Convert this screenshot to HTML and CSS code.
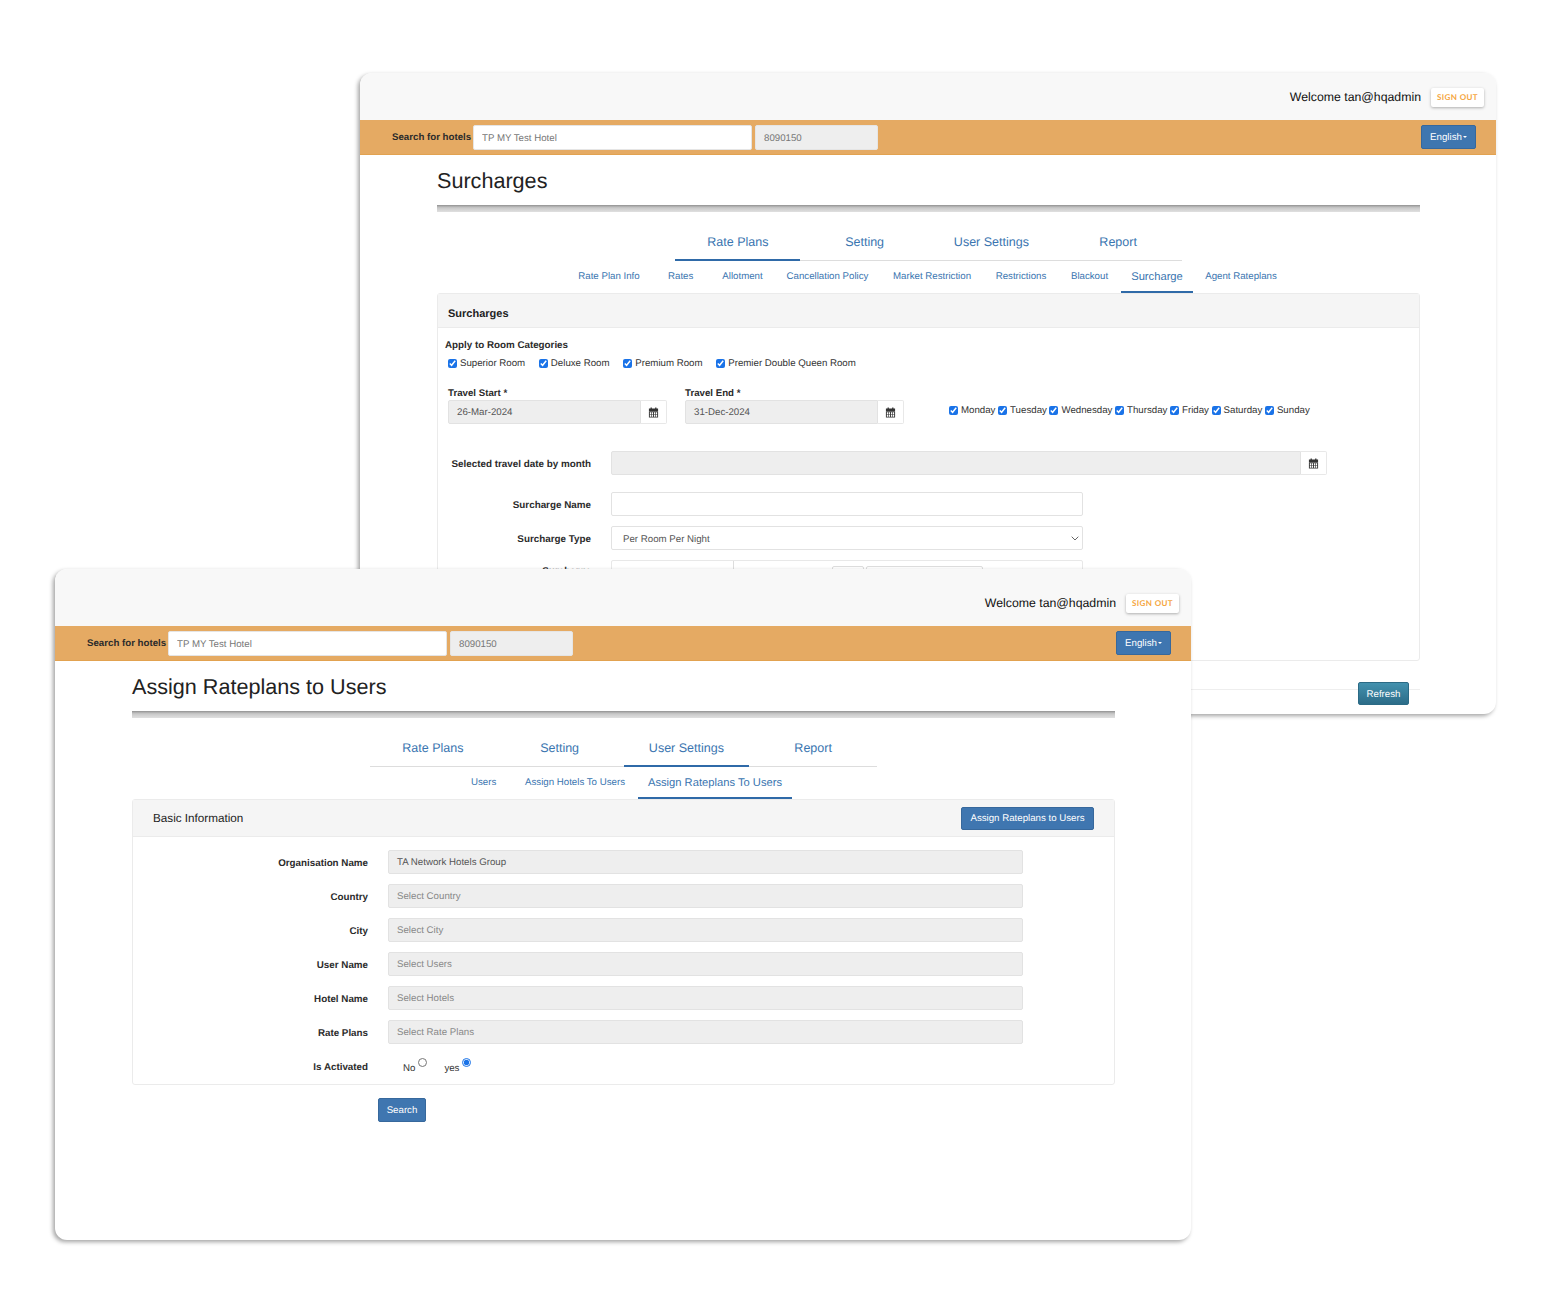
FILE: index.html
```html
<!DOCTYPE html>
<html lang="en">
<head>
<meta charset="utf-8">
<title>Rate plan screens</title>
<link rel="stylesheet" href="styles.css">
</head>
<body>
<svg class="sprite" width="0" height="0" aria-hidden="true">
  <symbol id="cal" viewBox="0 0 12 12">
    <path fill="currentColor" fill-rule="evenodd" d="M1 1.6h1.8V.6h1.4v1h3.6v-1h1.4v1H11v2.9H1zM1 5h10v6.4H1zM2 5.7v2.1h1.4V5.7zm2.1 0v2.1h1.4V5.7zm2.4 0v2.1h1.4V5.7zm2.1 0v2.1H10V5.7zM2 8.5v2.1h1.4V8.5zm2.1 0v2.1h1.4V8.5zm2.4 0v2.1h1.4V8.5zm2.1 0v2.1H10V8.5z"/>
  </symbol>
</svg>
<main class="canvas">

  <section class="window window-back">
    <header class="topbar topbar-short">
      <span class="welcome">Welcome tan@hqadmin</span>
      <button class="signout" type="button">SIGN OUT</button>
    </header>
    <div class="searchbar">
      <label class="search-label">Search for hotels</label>
      <input class="hotel-input" type="text" value="TP MY Test Hotel">
      <input class="id-input" type="text" value="8090150" disabled>
      <button class="btn btn-lang" type="button">English<span class="caret"></span></button>
    </div>
    <div class="content">
      <h1 class="title">Surcharges</h1>
      <div class="rule"></div>
      <nav class="tabs">
        <a class="tab active">Rate Plans</a><a class="tab">Setting</a><a class="tab">User Settings</a><a class="tab">Report</a>
      </nav>
      <nav class="subtabs subtabs-back">
        <a class="subtab st-info">Rate Plan Info</a>
        <a class="subtab st-rates">Rates</a>
        <a class="subtab st-allot">Allotment</a>
        <a class="subtab st-cancel">Cancellation Policy</a>
        <a class="subtab st-market">Market Restriction</a>
        <a class="subtab st-restr">Restrictions</a>
        <a class="subtab st-black">Blackout</a>
        <a class="subtab active st-sur">Surcharge</a>
        <a class="subtab st-agent">Agent Rateplans</a>
      </nav>
      <section class="panel panel-back">
        <div class="panel-head panel-head-back"><strong>Surcharges</strong></div>
        <div class="panel-body-back">
          <div class="apply-title">Apply to Room Categories</div>
          <div class="rooms">
            <label class="check"><input type="checkbox" checked>Superior Room</label>
            <label class="check"><input type="checkbox" checked>Deluxe Room</label>
            <label class="check"><input type="checkbox" checked>Premium Room</label>
            <label class="check"><input type="checkbox" checked>Premier Double Queen Room</label>
          </div>
          <div class="travel">
            <div class="date-field">
              <div class="field-label">Travel Start *</div>
              <div class="input-group">
                <div class="ctrl ctrl-disabled">26-Mar-2024</div>
                <span class="addon"><svg class="cal"><use href="#cal"/></svg></span>
              </div>
            </div>
            <div class="date-field">
              <div class="field-label">Travel End *</div>
              <div class="input-group">
                <div class="ctrl ctrl-disabled">31-Dec-2024</div>
                <span class="addon"><svg class="cal"><use href="#cal"/></svg></span>
              </div>
            </div>
            <div class="days">
              <label class="day"><input type="checkbox" checked>Monday</label>
              <label class="day"><input type="checkbox" checked>Tuesday</label>
              <label class="day"><input type="checkbox" checked>Wednesday</label>
              <label class="day"><input type="checkbox" checked>Thursday</label>
              <label class="day"><input type="checkbox" checked>Friday</label>
              <label class="day"><input type="checkbox" checked>Saturday</label>
              <label class="day"><input type="checkbox" checked>Sunday</label>
            </div>
          </div>
          <div class="hrow hrow-month">
            <label class="hlabel">Selected travel date by month</label>
            <div class="input-group month-group">
              <div class="ctrl ctrl-disabled"></div>
              <span class="addon"><svg class="cal"><use href="#cal"/></svg></span>
            </div>
          </div>
          <div class="hrow hrow-name">
            <label class="hlabel">Surcharge Name</label>
            <input class="ctrl wide" type="text">
          </div>
          <div class="hrow hrow-type">
            <label class="hlabel">Surcharge Type</label>
            <select class="ctrl wide sel"><option>Per Room Per Night</option></select>
          </div>
          <div class="hrow hrow-amount">
            <label class="hlabel">Surcharge</label>
            <div class="amount">
              <span class="amount-a"></span>
              <span class="amount-b"></span>
              <span class="amount-c"></span>
              <span class="amount-d"></span>
            </div>
          </div>
        </div>
      </section>
      <footer class="foot">
        <button class="btn btn-refresh" type="button">Refresh</button>
      </footer>
    </div>
  </section>

  <section class="window window-front">
    <header class="topbar topbar-tall">
      <span class="welcome">Welcome tan@hqadmin</span>
      <button class="signout" type="button">SIGN OUT</button>
    </header>
    <div class="searchbar">
      <label class="search-label">Search for hotels</label>
      <input class="hotel-input" type="text" value="TP MY Test Hotel">
      <input class="id-input" type="text" value="8090150" disabled>
      <button class="btn btn-lang" type="button">English<span class="caret"></span></button>
    </div>
    <div class="content">
      <h1 class="title">Assign Rateplans to Users</h1>
      <div class="rule"></div>
      <nav class="tabs">
        <a class="tab">Rate Plans</a><a class="tab">Setting</a><a class="tab active">User Settings</a><a class="tab">Report</a>
      </nav>
      <nav class="subtabs subtabs-front">
        <a class="subtab st-users">Users</a>
        <a class="subtab st-hotels">Assign Hotels To Users</a>
        <a class="subtab active st-assign">Assign Rateplans To Users</a>
      </nav>
      <section class="panel panel-front">
        <div class="panel-head panel-head-front">
          <span class="basic">Basic Information</span>
          <button class="btn btn-assign" type="button">Assign Rateplans to Users</button>
        </div>
        <div class="panel-body-front">
          <div class="frow"><label class="flabel">Organisation Name</label><div class="ctrl ctrl-disabled fctrl filled">TA Network Hotels Group</div></div>
          <div class="frow"><label class="flabel">Country</label><div class="ctrl ctrl-disabled fctrl">Select Country</div></div>
          <div class="frow"><label class="flabel">City</label><div class="ctrl ctrl-disabled fctrl">Select City</div></div>
          <div class="frow"><label class="flabel">User Name</label><div class="ctrl ctrl-disabled fctrl">Select Users</div></div>
          <div class="frow"><label class="flabel">Hotel Name</label><div class="ctrl ctrl-disabled fctrl">Select Hotels</div></div>
          <div class="frow"><label class="flabel">Rate Plans</label><div class="ctrl ctrl-disabled fctrl">Select Rate Plans</div></div>
          <div class="frow frow-radio">
            <label class="flabel">Is Activated</label>
            <div class="radios">
              <label class="radio">No<input type="radio" name="act"></label>
              <label class="radio">yes<input type="radio" name="act" checked></label>
            </div>
          </div>
        </div>
      </section>
      <div class="search-row"><button class="btn btn-search" type="button">Search</button></div>
    </div>
  </section>

</main>
</body>
</html>
```

FILE: styles.css
```css
* { box-sizing: border-box; text-rendering: geometricPrecision; }
html, body { margin: 0; padding: 0; background: #fff; }
body { font-family: "Liberation Sans", Arial, sans-serif; color: #333; font-size: 9.7px; }
.sprite { position: absolute; }
.canvas { position: relative; width: 1552px; height: 1312px; overflow: hidden; }

.window {
  position: absolute;
  width: 1136px;
  background: #fff;
  border-radius: 12px;
  overflow: hidden;
  box-shadow: -2px 2px 4px rgba(0,0,0,.36);
}
.window-back { left: 360px; top: 73px; height: 641px; }
.window-front { left: 55px; top: 569px; height: 671px; }

.topbar {
  display: flex;
  justify-content: flex-end;
  align-items: center;
  background: #f8f8f8;
  padding-right: 12px;
  gap: 10px;
}
.topbar-short { height: 47px; padding-top: 1px; }
.topbar-tall { height: 57px; padding-top: 11px; }
.welcome { font-size: 12.3px; color: #111; }
.signout {
  width: 53px;
  height: 19px;
  padding: 0;
  border: 0;
  border-radius: 2px;
  background: #fff;
  box-shadow: 0 1px 3px rgba(0,0,0,.3);
  color: #f5a53c;
  font: bold 8px "Lato", "Liberation Sans", sans-serif;
  letter-spacing: .4px;
}

.searchbar {
  display: flex;
  align-items: center;
  height: 35px;
  padding: 0 20px 0 32px;
  background: #e5aa63;
  border-bottom: 1px solid #e2a250;
}
.search-label { font-weight: bold; font-size: 9.7px; color: #2b2b2b; width: 80px; white-space: nowrap; margin-top: 1px; }
.hotel-input, .id-input {
  height: 25px;
  padding: 2px 8px 0;
  border: 1px solid #e5e5e5;
  border-radius: 2px;
  font: 9.7px "Liberation Sans", sans-serif;
  color: #777;
  outline: 0;
}
.hotel-input { width: 279px; background: #fff; margin-left: 1px; }
.id-input { width: 123px; background: #eee; margin-left: 3px; color: #777; }

.btn {
  padding: 1px 0 0;
  border: 1px solid #37689c;
  border-radius: 2px;
  background: #3f76b0;
  color: #fff;
  font: 9.7px "Liberation Sans", sans-serif;
}
.btn-lang { width: 55px; height: 24px; margin-left: auto; }
.caret {
  display: inline-block;
  margin-left: 1px;
  vertical-align: middle;
  border-top: 2.5px solid #fff;
  border-left: 2.5px solid transparent;
  border-right: 2.5px solid transparent;
}

.content { padding: 0 76px 0 77px; }
.title { margin: 0; padding-top: 13px; height: 50px; font-size: 21.6px; line-height: 26px; font-weight: 400; color: #222; }
.rule {
  height: 7px;
  background: linear-gradient(#8f8f8f 0, #a8a8a8 15%, #c8c8c8 40%, #e0e0e0 100%);
}

.tabs {
  display: flex;
  width: 507px;
  margin: 13px 0 0 238px;
  border-bottom: 1px solid #ddd;
}
.tab {
  flex: 1 1 0;
  height: 36px;
  padding: 10px 1px 0 0;
  text-align: center;
  font-size: 12.5px;
  line-height: 15px;
  color: #3a75b0;
  margin-bottom: -1px;
}
.tab.active { background: linear-gradient(#2f6aa8, #2f6aa8) left bottom / 125px 2px no-repeat; }

.subtabs { display: flex; height: 32px; align-items: stretch; }
.subtab {
  display: block;
  font-size: 9.7px;
  line-height: 11px;
  padding-top: 10px;
  color: #3a75b0;
  white-space: nowrap;
  text-align: center;
}
.subtab.active { font-size: 11.2px; border-bottom: 2px solid #2f6aa8; padding-top: 11px; }

.subtabs-back { padding-left: 141px; }
.st-info { width: 62px; }
.st-rates { width: 25px; margin-left: 28px; }
.st-allot { width: 41px; margin-left: 29px; }
.st-cancel { width: 83px; margin-left: 23px; }
.st-market { width: 80px; margin-left: 23px; }
.st-restr { width: 52px; margin-left: 23px; }
.st-black { width: 39px; margin-left: 23px; }
.st-sur { width: 72px; margin-left: 12px; }
.st-agent { width: 72px; margin-left: 12px; }

.subtabs-front { padding-left: 339px; }
.st-users { width: 25px; }
.st-hotels { width: 100px; margin-left: 29px; }
.st-assign { width: 154px; margin-left: 13px; }

.panel { border: 1px solid #ebebeb; border-radius: 3px; }
.panel-back { height: 368px; }
.panel-head { display: flex; align-items: center; background: #f5f5f5; border-bottom: 1px solid #ebebeb; }
.panel-head-back { height: 34px; padding: 6px 0 0 10px; font-size: 11px; color: #222; }
.panel-head-front { height: 37px; padding: 0 20px; justify-content: space-between; }

.panel-body-back { padding-top: 12px; padding-left: 7px; }
.apply-title { font-weight: bold; font-size: 9.8px; line-height: 12px; color: #2b2b2b; }
.rooms { display: flex; margin: 6px 0 0 3px; gap: 13.7px; }
.check, .day { display: flex; align-items: center; color: #333; white-space: nowrap; }
.check { font-size: 9.7px; line-height: 12px; }
.check input, .day input {
  width: 9px; height: 9px; margin: 0 3px 2px 0; accent-color: #1a73e8;
}
.travel { display: flex; margin: 18px 0 0 3px; height: 46px; }
.date-field { width: 219px; margin-right: 18px; }
.field-label { font-weight: bold; font-size: 9.7px; line-height: 12px; height: 12px; color: #2b2b2b; }
.input-group { display: flex; height: 24px; }
.ctrl {
  display: flex;
  align-items: center;
  height: 24px;
  padding: 0 8px;
  border: 1px solid #e2e2e2;
  border-radius: 2px;
  font: 9.7px "Liberation Sans", sans-serif;
  color: #555;
  background: #fff;
  outline: 0;
}
.ctrl-disabled { background: #eee; }
.input-group .ctrl { flex: 1; border-radius: 2px 0 0 2px; }
.addon {
  display: flex;
  align-items: center;
  justify-content: center;
  width: 26px;
  border: 1px solid #e8e8e8;
  border-left: 0;
  border-radius: 0 2px 2px 0;
  background: #fff;
  color: #333;
}
.cal { width: 11px; height: 11px; margin-left: -1px; }
.days { display: flex; margin-left: 27px; height: 24px; margin-top: 11px; align-items: center; }
.day { font-size: 9.7px; line-height: 12px; margin-right: 2.6px; }
.hrow { display: grid; grid-template-columns: 146px auto; column-gap: 20px; align-items: center; justify-items: start; }
.hlabel { justify-self: end; font-weight: bold; font-size: 9.85px; color: #2b2b2b; white-space: nowrap; margin-top: 3px; }
.hrow-amount .hlabel { margin-top: -1px; }
.hrow-month { margin-top: 17px; }
.month-group { width: 716px; }
.hrow-name { margin-top: 17px; }
.hrow-type { margin-top: 10px; }
.hrow-amount { margin-top: 10px; }
.wide { width: 472px; }
.sel {
  appearance: none;
  padding: 2px 20px 0 11px;
  background: #fff url("data:image/svg+xml,%3Csvg xmlns='http://www.w3.org/2000/svg' width='8' height='5'%3E%3Cpath d='M.7.7 4 4l3.3-3.3' fill='none' stroke='%23666' stroke-width='1'/%3E%3C/svg%3E") no-repeat right 3px center;
}
.amount { display: flex; width: 472px; height: 24px; border: 1px solid #e8e8e8; border-radius: 2px; }
.amount-a { width: 122px; border-right: 1px solid #ddd; }
.amount-b { width: 98px; }
.amount-c { width: 32px; border: 1px solid #ddd; border-radius: 2px; margin: 5px 2px 0 0; }
.amount-d { width: 117px; border: 1px solid #ddd; border-radius: 2px; margin-top: 5px; }

.foot {
  position: relative;
  height: 1px;
  margin-top: 28px;
  background: #eee;
  padding-right: 11px;
  display: flex;
  justify-content: flex-end;
}
.btn-refresh {
  width: 51px;
  height: 23px;
  margin-top: -7px;
  border-color: #2b6a85;
  background: linear-gradient(#4391ae, #2c6c88);
}

.panel-front { height: 286px; }
.basic { font-size: 11.7px; color: #222; }
.btn-assign { width: 133px; height: 23px; }
.panel-body-front { padding-top: 13px; }
.frow { display: grid; grid-template-columns: 235px 635px; column-gap: 20px; align-items: center; height: 24px; margin-bottom: 10px; }
.flabel { justify-self: end; font-weight: bold; font-size: 9.8px; color: #2b2b2b; white-space: nowrap; margin-top: 2px; }
.fctrl { color: #888; padding-top: 1px; }
.filled { color: #555; }
.frow-radio { padding-top: 1px; }
.radios { display: flex; gap: 17px; padding-left: 15px; }
.radio { display: flex; align-items: flex-start; font-size: 9.7px; line-height: 12px; padding-top: 4px; color: #333; }
.radio input { width: 9px; height: 9px; margin: -5px 0 0 3px; accent-color: #1a73e8; }
.search-row { padding: 13px 0 0 246px; }
.btn-search { width: 48px; height: 24px; }
```
